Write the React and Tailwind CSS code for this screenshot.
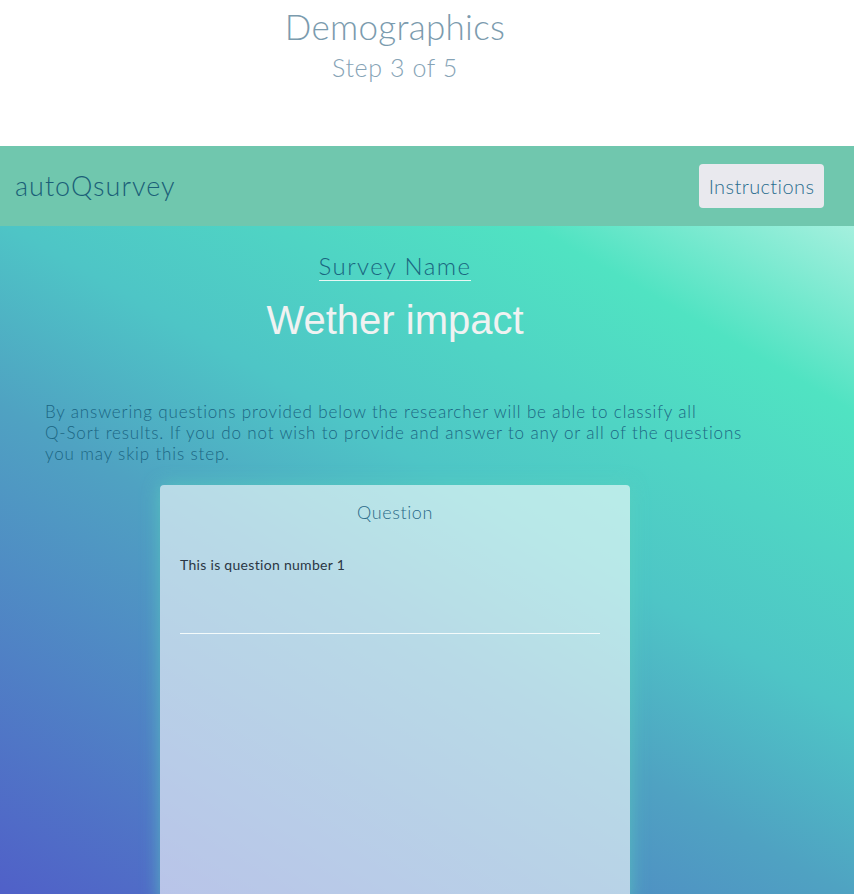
export default function App() {
  const lato = { fontFamily: 'Lato, "Open Sans", sans-serif' };
  return (
    <div className="w-[854px] h-[894px] overflow-hidden bg-white" style={lato}>
      <div className="h-[146px] w-[790px] flex flex-col items-center pt-[4px]">
        <div className="text-[35px] font-light leading-[44px] text-[#7b9bae] tracking-[0.3px]">Demographics</div>
        <div className="text-[25px] font-light leading-[30px] mt-[4px] text-[#86a3b6] tracking-[0.6px]">Step 3 of 5</div>
      </div>
      <div className="h-[80px] bg-[#70c7ae] flex items-center justify-between pl-[15px] pr-[30px]">
        <div className="text-[27px] font-light text-[#1b5f78] tracking-[1px]">autoQsurvey</div>
        <button className="h-[44px] w-[125px] rounded-[4px] bg-[#e9e9ee] text-[20px] font-light text-[#2a6d8e] tracking-[0.4px]">Instructions</button>
      </div>
      <div className="h-[668px] bg-[linear-gradient(30deg,#5060c8_0%,#4fa2c2_42%,#4ec5c6_58%,#50e3c2_84%,#a4f0de_100%)]">
        <div className="w-[790px] flex flex-col items-center pt-[26px]">
          <div className="text-[24px] font-light text-[#1a6680] leading-[28px] border-b border-[#e8f8f4] tracking-[1.4px]">Survey Name</div>
          <div className="mt-[16px] text-[40px] leading-[46px] text-[#f0f2f2]" style={{ fontFamily: '"Liberation Sans", Arial, sans-serif' }}>Wether impact</div>
        </div>
        <p className="mt-[58px] ml-[45px] text-[17px] leading-[21px] font-light text-[#1b6683] tracking-[0.85px]">
          By answering questions provided below the researcher will be able to classify all<br />
          Q-Sort results. If you do not wish to provide and answer to any or all of the questions<br />
          you may skip this step.
        </p>
        <div className="mt-[21px] ml-[160px] w-[470px] h-[420px] rounded-[4px] bg-white/60 shadow-[0_0_18px_rgba(90,210,190,0.7)] px-[20px]">
          <div className="pt-[14px] text-center text-[18px] font-light text-[#2a6a88] tracking-[0.6px]">Question</div>
          <div className="mt-[28px] text-[14px] font-normal text-[#2a3644] tracking-[0.3px]">This is question number 1</div>
          <div className="mt-[58px] w-[420px] h-[1px] bg-[#f4fbfb]"></div>
        </div>
      </div>
    </div>
  );
}
